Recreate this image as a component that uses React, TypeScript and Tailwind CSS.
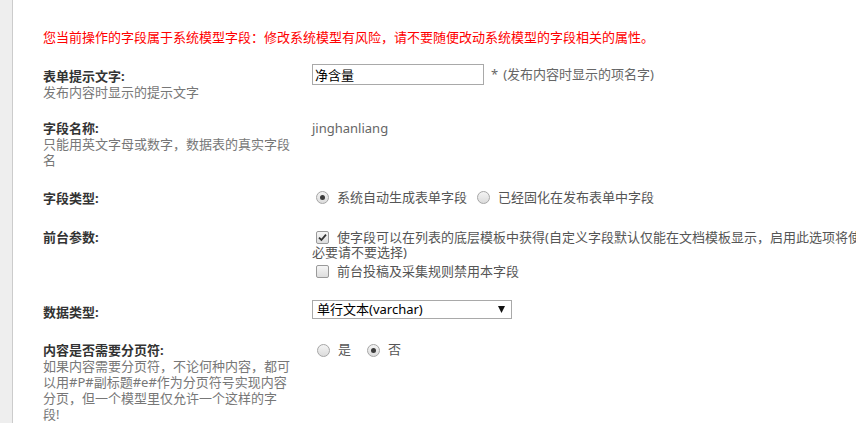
import React from 'react';

function Radio({ checked }: { checked?: boolean }) {
  return (
    <span className="flex h-[13px] w-[13px] shrink-0 items-center justify-center rounded-full border border-[#a6a6a6] bg-gradient-to-b from-[#f4f4f4] to-[#dcdcdc]">
      {checked && <span className="h-[5px] w-[5px] rounded-full bg-[#3c3c3c]" />}
    </span>
  );
}

function Checkbox({ checked }: { checked?: boolean }) {
  return (
    <span className="flex h-[13px] w-[13px] shrink-0 items-center justify-center rounded-[2px] border border-[#9a9a9a] bg-gradient-to-b from-[#f6f6f6] to-[#dedede]">
      {checked && (
        <svg width="9" height="9" viewBox="0 0 9 9">
          <path d="M1 4.6 L3.4 7 L8 1.6" fill="none" stroke="#333" strokeWidth="1.8" />
        </svg>
      )}
    </span>
  );
}

function Label({ title, desc }: { title: string; desc?: string }) {
  return (
    <div className="w-[250px] shrink-0 leading-[16px]">
      <div className="font-bold text-[#333]">{title}</div>
      {desc && <div className="text-[#777]">{desc}</div>}
    </div>
  );
}

export default function App() {
  return (
    <div className="flex h-[423px] w-[856px] overflow-hidden bg-white font-['Noto_Sans','Noto_Sans_CJK_SC',sans-serif] text-[13px]">
      {/* left gray strip */}
      <div className="w-[13px] shrink-0 border-r border-[#cccccc] bg-[#eeeeee]" />

      <div className="min-w-0 flex-1 pl-[30px] pt-[29px]">
        <div className="whitespace-nowrap leading-[16px] text-[#ff0000]">
          您当前操作的字段属于系统模型字段：修改系统模型有风险，请不要随便改动系统模型的字段相关的属性。
        </div>

        {/* 表单提示文字 */}
        <div className="mt-[19px] flex">
          <div className="pt-[4px]">
            <Label title="表单提示文字:" desc="发布内容时显示的提示文字" />
          </div>
          <div className="ml-[19px] flex h-[21px] items-center whitespace-nowrap">
            <input
              readOnly
              value="净含量"
              className="h-[21px] w-[172px] border border-[#a9a9a9] px-[2px] text-[13px] text-black outline-none"
            />
            <span className="ml-[7px] text-[#666]">*</span>
            <span className="ml-[5px] text-[#666]">(发布内容时显示的项名字)</span>
          </div>
        </div>

        {/* 字段名称 */}
        <div className="mt-[20px] flex">
          <Label title="字段名称:" desc="只能用英文字母或数字，数据表的真实字段名" />
          <div className="ml-[19px] leading-[16px] text-[#666]">jinghanliang</div>
        </div>

        {/* 字段类型 */}
        <div className="mt-[22px] flex">
          <Label title="字段类型:" />
          <div className="ml-[19px] flex h-[15px] items-center whitespace-nowrap text-[#555]">
            <span className="ml-[4px]"><Radio checked /></span>
            <span className="ml-[8px]">系统自动生成表单字段</span>
            <span className="ml-[10px]"><Radio /></span>
            <span className="ml-[8px]">已经固化在发布表单中字段</span>
          </div>
        </div>

        {/* 前台参数 */}
        <div className="mt-[23px] flex">
          <Label title="前台参数:" />
          <div className="ml-[19px] pt-[1px] leading-[15px] text-[#555]">
            <div className="flex h-[15px] items-center whitespace-nowrap">
              <span className="ml-[4px]"><Checkbox checked /></span>
              <span className="ml-[8px]">
                使字段可以在列表的底层模板中获得(自定义字段默认仅能在文档模板显示，启用此选项将使列表查询效率降低，非
              </span>
            </div>
            <div>必要请不要选择)</div>
            <div className="mt-[4px] flex h-[15px] items-center whitespace-nowrap">
              <span className="ml-[4px]"><Checkbox /></span>
              <span className="ml-[8px]">前台投稿及采集规则禁用本字段</span>
            </div>
          </div>
        </div>

        {/* 数据类型 */}
        <div className="mt-[21px] flex">
          <div className="pt-[4px]">
            <Label title="数据类型:" />
          </div>
          <div className="ml-[19px]">
            <div className="flex h-[19px] w-[200px] items-center justify-between border border-[#a9a9a9] pl-[4px] pr-[6px] text-black">
              <span className="leading-[17px]">单行文本(varchar)</span>
              <svg width="7" height="7" viewBox="0 0 7 7">
                <polygon points="0,0 7,0 3.5,7" fill="#111" />
              </svg>
            </div>
          </div>
        </div>

        {/* 分页符 */}
        <div className="mt-[22px] flex">
          <Label
            title="内容是否需要分页符:"
            desc="如果内容需要分页符，不论何种内容，都可以用#P#副标题#e#作为分页符号实现内容分页，但一个模型里仅允许一个这样的字段!"
          />
          <div className="ml-[19px] flex h-[16px] items-center whitespace-nowrap text-[#555]">
            <span className="ml-[5px]"><Radio /></span>
            <span className="ml-[8px]">是</span>
            <span className="ml-[16px]"><Radio checked /></span>
            <span className="ml-[8px]">否</span>
          </div>
        </div>
      </div>
    </div>
  );
}
